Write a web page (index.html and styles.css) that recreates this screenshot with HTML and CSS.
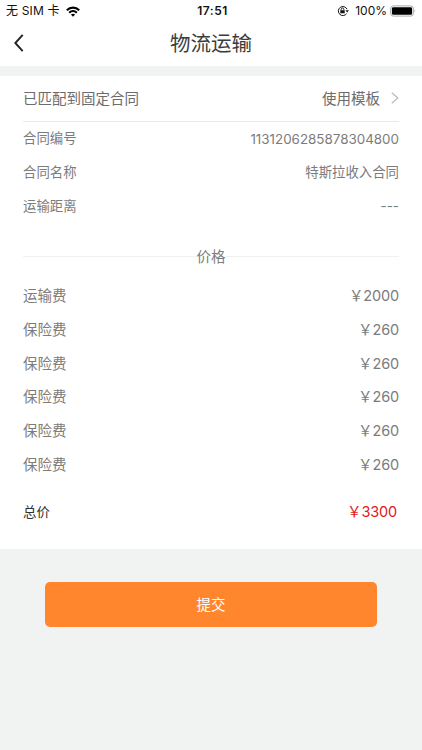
FILE: index.html
```html
<!DOCTYPE html>
<html lang="zh-CN">
<head>
<meta charset="utf-8">
<title>物流运输</title>
<link rel="stylesheet" href="styles.css">
</head>
<body>
<header class="top">
  <div class="status">
    <div class="carrier"><span>无 SIM 卡</span>
      <svg width="14" height="11" viewBox="0 0 14 11"><g fill="none" stroke="#000" stroke-width="2.2"><path d="M.8 4.2C4.4.7 9.6.7 13.2 4.2"/><path d="M3.2 6.7C5.4 4.7 8.6 4.7 10.8 6.7"/></g><path d="M4.9 8.5C6.2 7.4 7.8 7.4 9.1 8.5L7 10.7Z"/></svg>
    </div>
    <div class="time">17:51</div>
    <div class="power">
      <svg width="12" height="12" viewBox="0 0 12 12"><g fill="none" stroke="#111"><path d="M9.6 8.6A4.5 4.5 0 1 1 10 4.2"/><path d="M4.2 5.5V4.3a1.3 1.3 0 0 1 2.6 0V5.5" stroke-width=".9"/></g><path d="M3.3 5.2h4.4v3.1H3.3zM8.5 5.2h3.4L10.2 7.5z" fill="#111"/></svg>
      <span class="percent">100%</span>
      <svg class="battery" width="27" height="12" viewBox="0 0 27 12"><rect x=".6" y=".9" width="22.8" height="10.2" rx="2.6" fill="#fff" stroke="#aaa"/><rect x="1.9" y="2.2" width="20.2" height="7.6" rx="1.4"/><path d="M24.6 4.2q1.6 1.8 0 3.6z" fill="#aaa"/></svg>
    </div>
  </div>
  <div class="nav">
    <svg class="back" width="10" height="18" viewBox="0 0 10 18"><path d="M8.7.9 1.3 9l7.4 8.1" fill="none" stroke="#222" stroke-width="1.9"/></svg>
    <h1>物流运输</h1>
  </div>
</header>
<main class="card">
  <div class="match"><span class="label">已匹配到固定合同</span>
    <span class="template"><span class="label">使用模板</span><svg width="8" height="12" viewBox="0 0 8 12"><path d="M.8.7 6.9 6 .8 11.3" fill="none" stroke="#bbb" stroke-width="1.2"/></svg></span>
  </div>
  <div class="info">
    <div class="row"><span class="label">合同编号</span><span class="number">1131206285878304800</span></div>
    <div class="row"><span class="label">合同名称</span><span class="label">特斯拉收入合同</span></div>
    <div class="row"><span class="label">运输距离</span><span class="dashes">---</span></div>
  </div>
  <div class="divider"><span class="label">价格</span></div>
  <div class="fees">
    <div class="row"><span class="label">运输费</span><span class="amount">&#65509;2000</span></div>
    <div class="row"><span class="label">保险费</span><span class="amount">&#65509;260</span></div>
    <div class="row"><span class="label">保险费</span><span class="amount">&#65509;260</span></div>
    <div class="row"><span class="label">保险费</span><span class="amount">&#65509;260</span></div>
    <div class="row"><span class="label">保险费</span><span class="amount">&#65509;260</span></div>
    <div class="row"><span class="label">保险费</span><span class="amount">&#65509;260</span></div>
  </div>
  <div class="total"><span class="label">总价</span><span class="sum">&#65509;3300</span></div>
</main>
<button class="submit" type="button">提交</button>
</body>
</html>
```
FILE: styles.css
```css
* { box-sizing: border-box; }
body {
  margin: 0;
  height: 750px;
  overflow: hidden;
  background: #f1f3f3;
  color: #7c7c7c;
  font-family: Inter, "Noto Sans CJK SC", sans-serif;
  font-size: 14.5px;
}
svg { display: block; flex: none; }
.top { height: 66px; background: #fff; color: #111; }
.status {
  display: grid;
  grid-template-columns: 1fr auto 1fr;
  align-items: center;
  height: 22px;
  padding: 0 5px 0 6px;
  font-size: 12px;
  line-height: 22px;
}
.carrier, .power { display: flex; align-items: center; }
.carrier { gap: 6px; white-space: nowrap; letter-spacing: .15px; }
.time { padding-left: 2px; font-weight: 600; letter-spacing: .5px; }
.power { justify-content: flex-end; }
.percent { margin: 0 3px 0 6px; }
.nav {
  display: grid;
  grid-template-columns: 30px 1fr 30px;
  align-items: center;
  height: 42px;
}
.back { margin-left: 14px; }
h1 {
  margin: 0;
  padding-top: 2px;
  font-size: 20.5px;
  font-weight: 400;
  line-height: 40px;
  text-align: center;
  color: #3c3c3c;
}
.card {
  height: 473px;
  margin-top: 10px;
  padding: 0 23px;
  background: #fff;
}
.match, .row, .total, .template {
  display: flex;
  align-items: center;
  justify-content: space-between;
}
.label { line-height: 22px; }
.match { height: 46px; border-bottom: 1px solid #e9e9e9; color: #6c6c6c; }
.template { gap: 11px; }
.match svg { margin-bottom: 1px; }
.info { font-size: 13.4px; }
.info .label { padding-bottom: 1px; }
.row { height: 33.75px; }
.amount, .sum { line-height: 22px; letter-spacing: -.15px; }
.divider {
  display: flex;
  align-items: center;
  height: 34px;
  margin-top: 16px;
}
.divider::before, .divider::after {
  content: "";
  flex: 1;
  height: 1px;
  background: #f1f1f1;
}
.divider .label { padding-top: 2px; }
.fees { margin-top: 6px; }
.total { height: 34px; margin-top: 13px; padding-right: 2px; font-size: 13.4px; color: #333; }
.sum { font-size: 14.5px; color: #e01820; }
.submit {
  display: block;
  width: 332px;
  height: 45px;
  margin: 33px auto 0 45px;
  padding: 0 0 2px;
  border: 0;
  border-radius: 5px;
  background: #ff862c;
  color: #fff;
  font: inherit;
}
```
